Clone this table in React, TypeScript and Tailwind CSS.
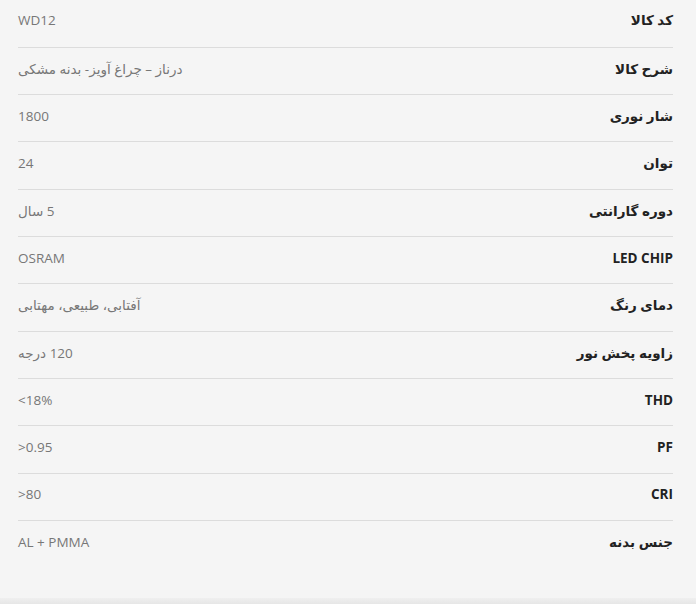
const specs = [
  { label: "کد کالا", value: "WD12" },
  { label: "شرح کالا", value: "درناز – چراغ آویز- بدنه مشکی" },
  { label: "شار نوری", value: "1800" },
  { label: "توان", value: "24" },
  { label: "دوره گارانتی", value: "5 سال" },
  { label: "LED CHIP", value: "OSRAM" },
  { label: "دمای رنگ", value: "آفتابی، طبیعی، مهتابی" },
  { label: "زاویه پخش نور", value: "120 درجه" },
  { label: "THD", value: "<18%", ltr: true },
  { label: "PF", value: ">0.95", ltr: true },
  { label: "CRI", value: ">80", ltr: true },
  { label: "جنس بدنه", value: "AL + PMMA", ltr: true },
];

export default function App() {
  return (
    <div
      className="w-[696px] h-[604px] bg-[#f5f5f5] flex flex-col overflow-hidden"
      style={{ fontFamily: '"Open Sans", "DejaVu Sans", sans-serif' }}
    >
      <div dir="rtl" className="flex-1 ml-[18px] mr-[23px] pt-[0.6px]">
        {specs.map((s, i) => (
          <div
            key={s.label}
            className={
              "flex items-center justify-between h-[47.3px] " +
              (i === 0 ? "pb-[6px] " : "pb-[3px] ") +
              (i < specs.length - 1 ? "border-b border-[#dcdcdc]" : "")
            }
          >
            <span className="text-[13.5px] font-bold text-[#222] leading-none">{s.label}</span>
            <span dir={s.ltr ? "ltr" : "rtl"} className="text-[13.5px] text-[#777] leading-none">
              {s.value}
            </span>
          </div>
        ))}
      </div>
      <div className="h-[6px] bg-gradient-to-b from-[#efefef] to-[#e6e6e6]" />
    </div>
  );
}
